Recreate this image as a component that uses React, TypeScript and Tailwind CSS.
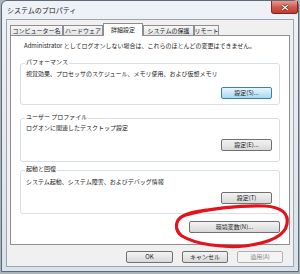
import React from "react";

const tab =
  "h-[10px] border border-b-0 border-[#8c8e94] bg-gradient-to-b from-[#f7f7f7] to-[#e4e4e4] text-[6px] leading-[9px] flex items-center justify-center whitespace-nowrap";
const btn =
  "h-[12px] border rounded-[2px] text-[6px] leading-[10px] flex items-center justify-center whitespace-nowrap";
const grayBtn = btn + " border-[#707070] bg-gradient-to-b from-[#f3f3f3] to-[#d9d9d9]";
const blueBtn = btn + " border-[#3c7fb1] bg-gradient-to-b from-[#e8f5fd] to-[#a6d8f3]";

const App = () => {
  return (
    <div className="w-[300px] h-[274px] bg-[#aab2ba] overflow-hidden relative font-['Noto_Sans_CJK_JP','Noto_Sans',sans-serif] text-[#1a1a1a]">
      <div className="ml-[1px] w-[298px] h-[272px] border border-[#5d6b79] rounded-t-[6px] bg-gradient-to-b from-[#eef2f6] to-[#d9e1e9] px-[4px] pb-[4px] flex flex-col">
        {/* title bar */}
        <div className="h-[18px] flex items-start justify-between">
          <div className="pl-[1px] pt-[5px] text-[7px] leading-[8px] text-[#222]">システムのプロパティ</div>
          <div className="w-[27px] h-[13px] -mr-[4px] rounded-b-[3px] border border-t-0 border-[#7a2a22] bg-gradient-to-b from-[#e89a90] via-[#d35a4f] to-[#c23a2f] flex items-center justify-center">
            <svg width="8" height="7" viewBox="0 0 8 7">
              <path d="M1 1 L7 6 M7 1 L1 6" stroke="#5a1a14" strokeWidth="2.4" />
              <path d="M1 1 L7 6 M7 1 L1 6" stroke="#fff" strokeWidth="1.3" />
            </svg>
          </div>
        </div>

        {/* client area */}
        <div className="flex-1 border border-[#9aa6b2] bg-[#f0f0f0] px-[3px] pt-[3px] flex flex-col">
          <div className="h-[12px] flex items-end">
            <div className={tab + " w-[53px]"}>コンピューター名</div>
            <div className={tab + " w-[40px]"}>ハードウェア</div>
            <div className="w-[40px] h-[13px] -mb-px relative z-10 border border-b-0 border-[#8c8e94] bg-white text-[6px] leading-[10px] flex items-start pt-[1px] justify-center">
              詳細設定
            </div>
            <div className={tab + " w-[51px]"}>システムの保護</div>
            <div className={tab + " w-[25px]"}>リモート</div>
          </div>

          <div className="h-[210px] border border-[#8c8e94] bg-white px-[9px] pt-[6px] flex flex-col">
            <div className="pl-[4px] text-[6px] leading-[8px] whitespace-nowrap">
              Administrator としてログオンしない場合は、これらのほとんどの変更はできません。
            </div>

            <div className="mt-[13px] h-[42px] border border-[#d5dfe5] rounded-[3px] pl-[4px] pr-[7px] flex flex-col">
              <div className="-mt-[6px] self-start bg-white px-[1px] h-[8px] text-[6px] leading-[8px]">パフォーマンス</div>
              <div className="mt-[4px] ml-[1px] text-[6px] leading-[8px] whitespace-nowrap">
                視覚効果、プロセッサのスケジュール、メモリ使用、および仮想メモリ
              </div>
              <div className={blueBtn + " mt-[9px] self-end w-[51px]"}>設定(S)...</div>
            </div>

            <div className="mt-[13px] h-[44px] border border-[#d5dfe5] rounded-[3px] pl-[4px] pr-[7px] flex flex-col">
              <div className="-mt-[6px] self-start bg-white px-[1px] h-[8px] text-[6px] leading-[8px]">ユーザー プロファイル</div>
              <div className="mt-[3px] ml-[1px] text-[6px] leading-[8px] whitespace-nowrap">
                ログオンに関連したデスクトップ設定
              </div>
              <div className={grayBtn + " mt-[7px] self-end w-[51px]"}>設定(E)...</div>
            </div>

            <div className="mt-[8px] h-[44px] border border-[#d5dfe5] rounded-[3px] pl-[4px] pr-[7px] flex flex-col">
              <div className="-mt-[6px] self-start bg-white px-[1px] h-[8px] text-[6px] leading-[8px]">起動と回復</div>
              <div className="mt-[5px] ml-[1px] text-[6px] leading-[8px] whitespace-nowrap">
                システム起動、システム障害、およびデバッグ情報
              </div>
              <div className={grayBtn + " mt-[6px] self-end w-[51px]"}>設定(T)</div>
            </div>

            <div className={grayBtn + " mt-[7px] self-end w-[91px]"}>環境変数(N)...</div>
          </div>

          <div className="mt-[6px] flex justify-end gap-[9px] pr-[7px]">
            <div className={grayBtn + " w-[47px]"}>OK</div>
            <div className={grayBtn + " w-[46px]"}>キャンセル</div>
            <div className={btn + " w-[46px] border-[#adb2b5] bg-[#f4f4f4] text-[#8a8a8a]"}>適用(A)</div>
          </div>
        </div>
      </div>

      {/* red marker circle drawn over the screenshot */}
      <svg className="absolute left-0 top-0 pointer-events-none" width="300" height="274" viewBox="0 0 300 274">
        <path
          d="M186 215 C205 209 240 205 265 206 C282 207 289 214 287 224 C285 236 268 243 245 246 C222 248 195 244 182 236 C174 230 175 220 183 216 C190 212 200 211 208 210"
          fill="none"
          stroke="#e3121b"
          strokeWidth="3.2"
          strokeLinecap="round"
        />
      </svg>
    </div>
  );
};

export default App;
